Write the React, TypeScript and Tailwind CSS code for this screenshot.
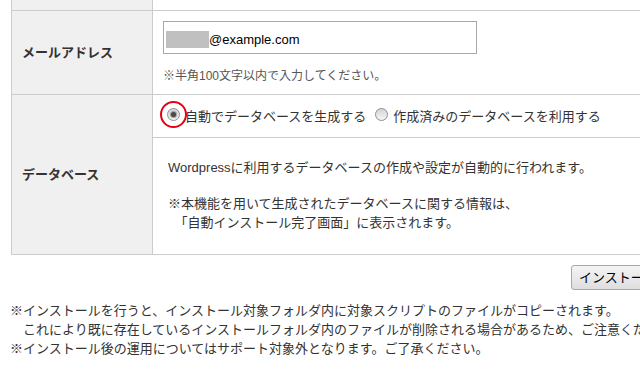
import type { ReactNode } from 'react'

function Radio({ checked = false, circled = false }: { checked?: boolean; circled?: boolean }) {
  return (
    <span className="relative mb-[4px] flex h-[13px] w-[13px] shrink-0 items-center justify-center rounded-full border border-[#8e8e8e] bg-[linear-gradient(#d4d4d4,#f6f6f6)]">
      {checked && <span className="h-[5px] w-[5px] rounded-full bg-[#4a4a4a] shadow-[0_0_1px_1px_#9a9a9a]" />}
      {circled && (
        <span className="absolute -left-[8px] -top-[8px] h-[27px] w-[27px] rounded-full border-2 border-[#e60012]" />
      )}
    </span>
  )
}

function Label({ children }: { children: ReactNode }) {
  return (
    <div className="flex w-[141px] shrink-0 items-center border-r border-[#cccccc] bg-[#f0f0f0] pl-[10px] font-bold text-[#333]">
      {children}
    </div>
  )
}

export default function App() {
  return (
    <div className="h-[370px] w-[640px] overflow-hidden bg-white text-[13px] leading-[19px] text-[#333] [font-family:'Liberation_Sans','Noto_Sans_CJK_JP',sans-serif]">
      <div className="ml-[11px] w-[760px] border-l border-[#cccccc]">
        {/* previous row, cut off at the top */}
        <div className="flex h-[11px] border-b border-[#cccccc]">
          <div className="w-[141px] border-r border-[#cccccc] bg-[#f0f0f0]" />
        </div>

        <div className="flex h-[84px] border-b border-[#cccccc]">
          <Label>メールアドレス</Label>
          <div className="pl-[10px] pt-[10px]">
            <div className="flex h-[33px] w-[314px] items-center border border-[#a9a9a9] pl-[2px] pt-[3px] text-black">
              <span className="h-[17px] w-[43px] bg-[#c0c0c0]" />
              <span>@example.com</span>
            </div>
            <p className="mt-[13px] text-[12px] leading-[18px] text-[#555]">
              ※半角100文字以内で入力してください。
            </p>
          </div>
        </div>

        <div className="flex h-[160px] border-b border-[#cccccc]">
          <Label>データベース</Label>
          <div className="flex flex-1 flex-col">
            <div className="flex h-[43px] items-center border-b border-[#cccccc] pl-[14px]">
              <Radio checked circled />
              <span className="ml-[5px]">自動でデータベースを生成する</span>
              <span className="ml-[9px]">
                <Radio />
              </span>
              <span className="ml-[5px]">作成済みのデータベースを利用する</span>
            </div>
            <div className="pl-[15px] pt-[20px]">
              <p>Wordpressに利用するデータベースの作成や設定が自動的に行われます。</p>
              <p className="mt-[17px]">
                ※本機能を用いて生成されたデータベースに関する情報は、
                <br />
                {'\u3000「自動インストール完了画面」に表示されます。'}
              </p>
            </div>
          </div>
        </div>
      </div>

      <div className="mt-[10px] flex">
        <button className="ml-[571px] h-[25px] shrink-0 whitespace-nowrap rounded-[3px] border border-[#a8a8a8] bg-[linear-gradient(#f4f4f4,#dedede)] px-[7px] text-black">
          インストールする
        </button>
      </div>

      <div className="mt-[11px] whitespace-nowrap pl-[10px]">
        <p>※インストールを行うと、インストール対象フォルダ内に対象スクリプトのファイルがコピーされます。</p>
        <p>{'\u3000これにより既に存在しているインストールフォルダ内のファイルが削除される場合があるため、ご注意ください。'}</p>
        <p>※インストール後の運用についてはサポート対象外となります。ご了承ください。</p>
      </div>
    </div>
  )
}
